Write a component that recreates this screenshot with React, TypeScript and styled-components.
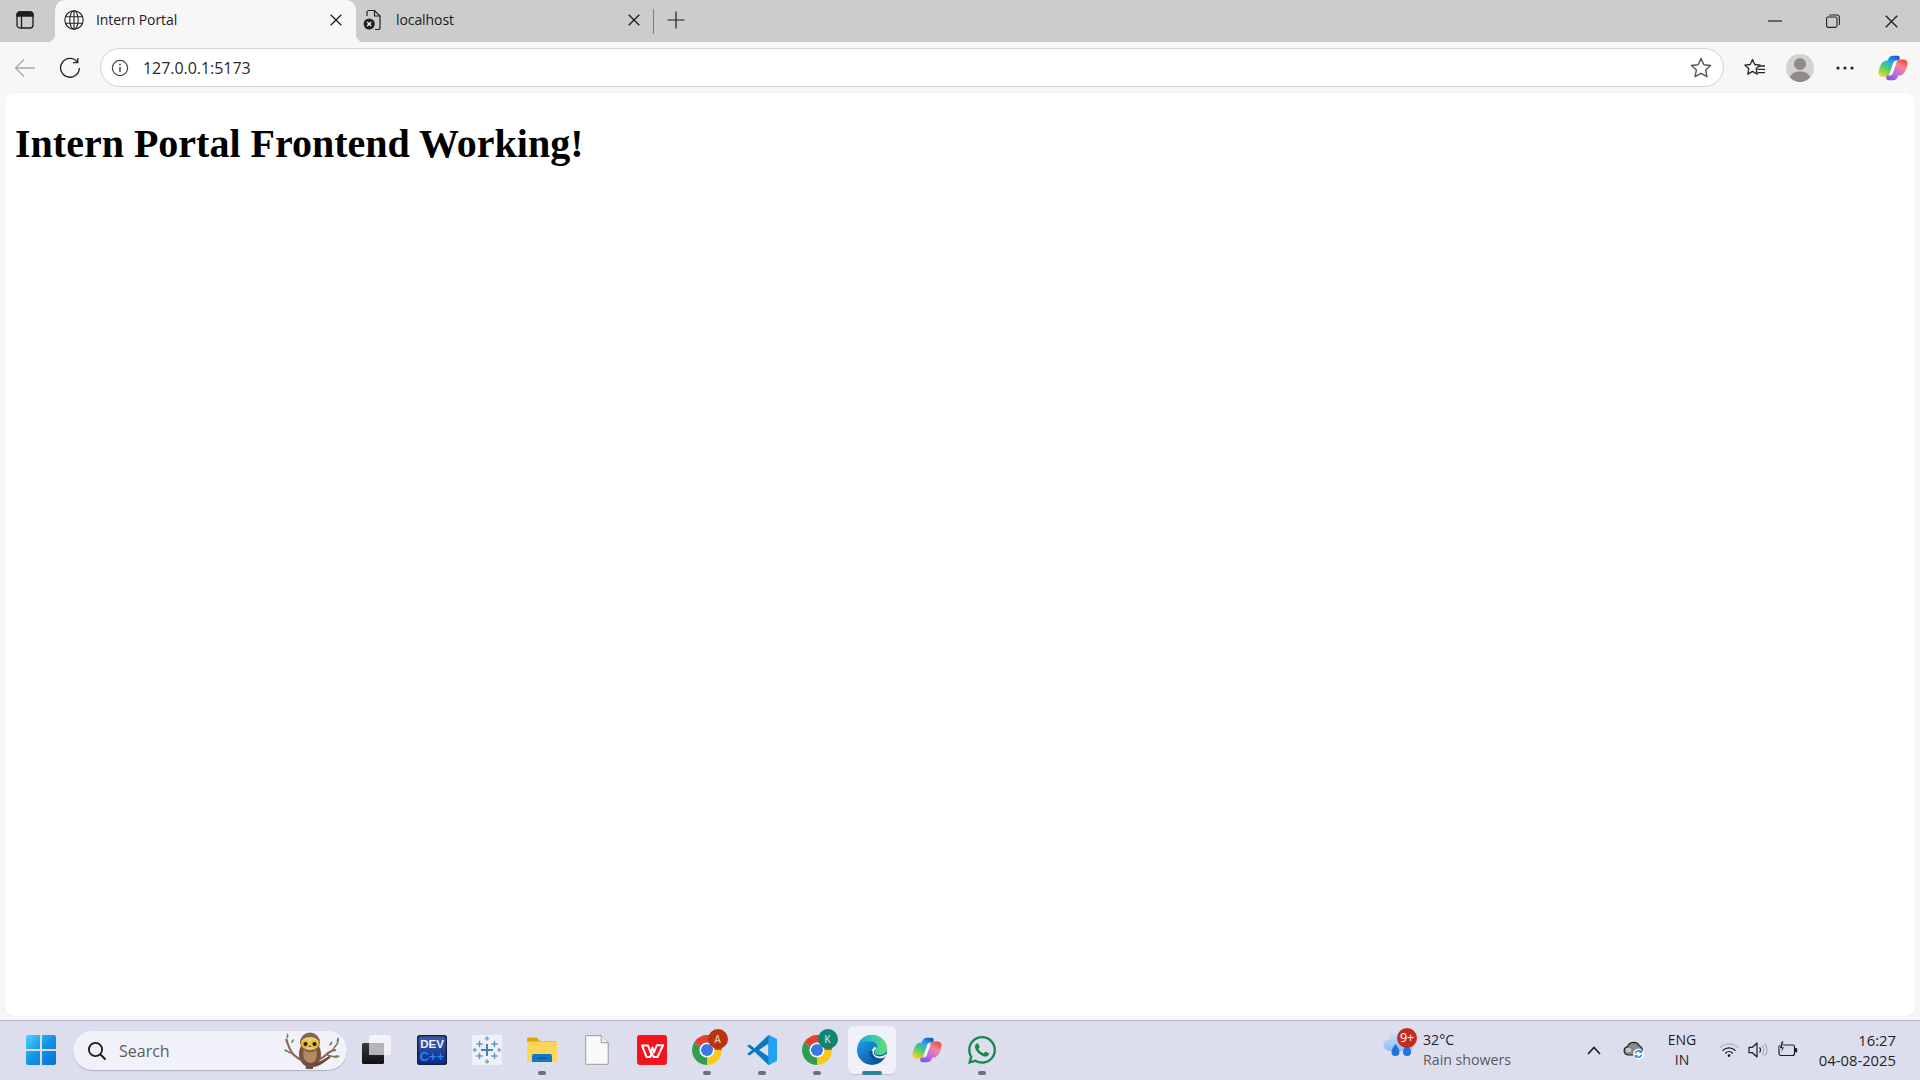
import React from "react";
import styled, { createGlobalStyle } from "styled-components";
import { FaWhatsapp } from "react-icons/fa";

const Global = createGlobalStyle`
  html, body { margin: 0; padding: 0; background: #ccc; }
  #root { width: 1920px; height: 1080px; overflow: hidden; }
  * { box-sizing: border-box; }
`;

const UI = `"Open Sans", "Noto Sans", Arial, sans-serif`;

const Screen = styled.div`
  width: 1920px;
  height: 1080px;
  display: flex;
  flex-direction: column;
  font-family: ${UI};
  color: #1f1f1f;
`;

const TabStrip = styled.header`
  height: 42px;
  flex: none;
  background: #cccccc;
  display: flex;
  align-items: stretch;
`;

const StripButton = styled.div<{ $w: number }>`
  width: ${(p) => p.$w}px;
  flex: none;
  display: flex;
  align-items: center;
  justify-content: center;
  padding-bottom: 2px;
`;

const Tab = styled.div<{ $active?: boolean; $w: number; $pl: number; $pr: number; $gap: number }>`
  position: relative;
  width: ${(p) => p.$w}px;
  flex: none;
  display: flex;
  align-items: center;
  gap: ${(p) => p.$gap}px;
  padding: 0 ${(p) => p.$pr}px 2px ${(p) => p.$pl}px;
  background: ${(p) => (p.$active ? "#f7f7f7" : "transparent")};
  border-radius: ${(p) => (p.$active ? "10px 10px 0 0" : "0")};
  ${(p) =>
    p.$active &&
    `
    &::before, &::after {
      content: "";
      position: absolute;
      bottom: 0;
      width: 8px;
      height: 8px;
    }
    &::before { left: -8px; background: radial-gradient(circle at 0 0, transparent 8px, #f7f7f7 8.5px); }
    &::after { right: -8px; background: radial-gradient(circle at 100% 0, transparent 8px, #f7f7f7 8.5px); }
  `}
`;

const TabTitle = styled.span`
  font-size: 14px;
  letter-spacing: -0.08px;
  line-height: 18px;
  flex: 1;
  white-space: nowrap;
  color: #202020;
`;

const TabDivider = styled.div`
  width: 1px;
  height: 25px;
  margin: 9px 0 0;
  background: #7c7c7c;
  flex: none;
`;

const WindowControls = styled.div`
  margin-left: auto;
  display: flex;
`;

const WindowButton = styled.div`
  width: 58px;
  height: 42px;
  display: flex;
  align-items: center;
  justify-content: center;
`;

const Toolbar = styled.div`
  height: 51px;
  flex: none;
  background: #f7f7f7;
  display: flex;
  align-items: center;
  padding: 0 0 0 2px;
`;

const ToolButton = styled.div<{ $w?: number }>`
  width: ${(p) => p.$w ?? 45}px;
  height: 40px;
  flex: none;
  display: flex;
  align-items: center;
  justify-content: center;
`;

const AddressBar = styled.div`
  flex: 1;
  height: 39px;
  margin-left: 8px;
  background: #ffffff;
  border: 1px solid #d2d2d2;
  border-radius: 20px;
  display: flex;
  align-items: center;
  padding: 0 11px 0 10px;
`;

const UrlText = styled.span`
  font-size: 16px;
  letter-spacing: -0.05px;
  color: #2a2a2a;
  margin-left: 14px;
  flex: 1;
`;

const ToolbarEnd = styled.div`
  display: flex;
  align-items: center;
  width: 196px;
  flex: none;
  padding-left: 8px;
`;

const Viewport = styled.main`
  flex: 1;
  min-height: 0;
  background: #f7f7f7;
  padding: 0 5px 4px;
  display: flex;
`;

const Page = styled.div`
  flex: 1;
  background: #ffffff;
  border-radius: 8px;
  box-shadow: 0 0 1px rgba(0, 0, 0, 0.16);
  padding: 28px 10px 0;
  font-family: "Liberation Serif", "Times New Roman", serif;
`;

const Heading = styled.h1`
  margin: 0;
  font-size: 40px;
  line-height: 46px;
  font-weight: 700;
  color: #000;
`;

const Taskbar = styled.footer`
  height: 60px;
  flex: none;
  background: #dcdeee;
  border-top: 1px solid #b5b5c4;
  display: flex;
  align-items: center;
  padding-left: 26px;
`;

const StartButton = styled.div`
  width: 30px;
  height: 30px;
  flex: none;
  margin-right: 17px;
  margin-top: -1px;
`;

const SearchPill = styled.div`
  width: 274px;
  height: 39px;
  flex: none;
  position: relative;
  background: #f1f2f9;
  border-radius: 20px;
  box-shadow: 0 1px 1px rgba(90, 90, 120, 0.35);
  display: flex;
  align-items: center;
  padding-left: 14px;
  gap: 12px;
`;

const SearchText = styled.span`
  font-size: 16px;
  color: #5c5c5c;
`;

const OwlSlot = styled.div`
  position: absolute;
  right: 6px;
  top: 0;
  width: 58px;
  height: 38px;
`;

const AppRow = styled.div`
  display: flex;
  margin-left: 2px;
  height: 59px;
`;

const AppSlot = styled.div<{ $active?: boolean }>`
  position: relative;
  width: 55px;
  height: 59px;
  flex: none;
  display: flex;
  align-items: center;
  justify-content: center;
  padding-bottom: 1px;
  &::before {
    content: "";
    display: ${(p) => (p.$active ? "block" : "none")};
    position: absolute;
    left: 4px;
    right: 3px;
    top: 5px;
    height: 48px;
    background: #eff0f8;
    border-radius: 5px;
    box-shadow: 0 1px 1px rgba(90, 90, 120, 0.2);
  }
`;

const RunDot = styled.span<{ $active?: boolean }>`
  position: absolute;
  left: 50%;
  bottom: 5px;
  transform: translateX(-50%);
  width: ${(p) => (p.$active ? 20 : 8)}px;
  height: 4px;
  border-radius: 2px;
  background: ${(p) => (p.$active ? "#2a8597" : "#6e6e76")};
`;

const AppIcon = styled.div`
  position: relative;
  width: 30px;
  height: 30px;
`;

const AccountBadge = styled.span<{ $bg: string; $fg: string }>`
  position: absolute;
  top: -6px;
  right: -6px;
  width: 20px;
  height: 20px;
  border-radius: 50%;
  background: ${(p) => p.$bg};
  color: ${(p) => p.$fg};
  font-size: 10px;
  font-weight: 600;
  display: flex;
  align-items: center;
  justify-content: center;
`;

const Tray = styled.div`
  margin-left: auto;
  display: flex;
  align-items: center;
  height: 59px;
  padding-bottom: 1px;
`;

const Weather = styled.div`
  display: flex;
  align-items: center;
  width: 196px;
  flex: none;
  padding-left: 7.5px;
`;

const WeatherIcon = styled.div`
  position: relative;
  width: 36px;
  height: 40px;
  flex: none;
  margin-right: 4px;
`;

const WeatherBadge = styled.span`
  position: absolute;
  left: 14px;
  top: -2px;
  width: 20px;
  height: 20px;
  border-radius: 50%;
  background: #c42b1c;
  color: #fff;
  font-size: 12.5px;
  line-height: 20px;
  text-align: center;
  letter-spacing: -0.2px;
`;

const WeatherText = styled.div`
  display: flex;
  flex-direction: column;
  font-size: 14.2px;
  line-height: 20px;
  white-space: nowrap;
`;

const WeatherCond = styled.span`
  color: #5a5a5a;
`;

const TrayIcon = styled.div<{ $w: number }>`
  width: ${(p) => p.$w}px;
  flex: none;
  display: flex;
  align-items: center;
  justify-content: center;
`;

const Lang = styled.div`
  width: 56px;
  flex: none;
  font-size: 14px;
  line-height: 20px;
  text-align: center;
  margin: 0 3.5px 0 2.5px;
`;

const Clock = styled.div`
  width: 116.5px;
  flex: none;
  font-size: 14.8px;
  line-height: 20px;
  text-align: right;
  padding-right: 24px;
  white-space: nowrap;
`;

const X = ({ s = 12, w = 1.3, c = "#1c1c1c" }: { s?: number; w?: number; c?: string }) => (
  <svg width={s} height={s} viewBox="0 0 12 12" fill="none" stroke={c} strokeWidth={w}>
    <path d="M.7.7l10.6 10.6M11.3.7L.7 11.3" />
  </svg>
);

const SidebarIcon = () => (
  <svg width="18" height="18" viewBox="0 0 18 18" fill="none" stroke="#1c1c1c" strokeWidth="1.3">
    <rect x="1" y="1" width="16" height="16" rx="3" />
    <path d="M1 4a3 3 0 0 1 3-3h10a3 3 0 0 1 3 3v1H1z" fill="#1c1c1c" />
    <path d="M5.5 5v12" />
  </svg>
);

const Globe = () => (
  <svg width="20" height="20" viewBox="0 0 20 20" fill="none" stroke="#222" strokeWidth="1.1">
    <circle cx="10" cy="10" r="9.2" />
    <ellipse cx="10" cy="10" rx="4.2" ry="9.2" />
    <path d="M10 .8v18.4M1.6 6.7h16.8M1.6 13.3h16.8" />
  </svg>
);

const BrokenDoc = () => (
  <svg width="19" height="22" viewBox="0 0 19 22" fill="none">
    <path d="M4 7V3.5A2 2 0 0 1 6 1.5h5.5L17 7v11.5a2 2 0 0 1-2 2h-3M11.5 1.5V7H17" stroke="#222" strokeWidth="1.2" />
    <circle cx="6.2" cy="15" r="5.6" fill="#222" />
    <path d="M4.2 13l4 4M8.2 13l-4 4" stroke="#fff" strokeWidth="1.2" />
  </svg>
);

const Plus = () => (
  <svg width="18" height="18" viewBox="0 0 18 18" stroke="#1c1c1c" strokeWidth="1.2">
    <path d="M9 .5v17M.5 9h17" />
  </svg>
);

const Back = () => (
  <svg width="22" height="20" viewBox="0 0 22 20" fill="none" stroke="#a9a9a9" strokeWidth="1.3">
    <path d="M21 10H1.5M10 1.5L1.5 10l8.5 8.5" />
  </svg>
);

const Reload = () => (
  <svg width="22" height="22" viewBox="0 0 22 22" fill="none" stroke="#262626" strokeWidth="1.35">
    <path d="M18.4 5A9.4 9.4 0 1 0 20.4 11" />
    <path d="M18.8 1v4.6h-4.8" />
  </svg>
);

const Info = () => (
  <svg width="18" height="18" viewBox="0 0 18 18" fill="none" stroke="#444" strokeWidth="1.2">
    <circle cx="9" cy="9" r="7.6" />
    <path d="M9 8v5" strokeWidth="1.5" />
    <circle cx="9" cy="5.4" r=".9" fill="#444" stroke="none" />
  </svg>
);

const Star = () => (
  <svg width="22" height="21" viewBox="0 0 22 21" fill="none" stroke="#555" strokeWidth="1.4" strokeLinejoin="round">
    <path d="M11 1.5l2.9 6.2 6.7.8-5 4.6 1.4 6.6-6-3.4-6 3.4 1.4-6.6-5-4.6 6.7-.8z" />
  </svg>
);

const Favorites = () => (
  <svg width="22" height="20" viewBox="0 0 22 20" fill="none" stroke="#262626" strokeWidth="1.3" strokeLinejoin="round">
    <path d="M8.5 1.5l2.3 5 5.4.6-4 3.7 1.1 5.3-4.8-2.7-4.8 2.7 1.1-5.3-4-3.7 5.4-.6z" />
    <path d="M14.5 8H21M13.5 11.3H21M14 14.6h7" />
  </svg>
);

const Profile = () => (
  <svg width="28" height="28" viewBox="0 0 28 28">
    <circle cx="14" cy="14" r="14" fill="#d4d2ce" />
    <circle cx="14" cy="10" r="6" fill="#8f8b87" />
    <path d="M4 23.5C5.5 19 9 17.5 14 17.5S22.5 19 24 23.5A14 14 0 0 1 14 28 14 14 0 0 1 4 23.5z" fill="#8f8b87" />
  </svg>
);

const Dots = () => (
  <svg width="18" height="4" viewBox="0 0 18 4" fill="#262626">
    <circle cx="2" cy="2" r="1.6" />
    <circle cx="9" cy="2" r="1.6" />
    <circle cx="16" cy="2" r="1.6" />
  </svg>
);

const RIBBON =
  "M11 6.5C12 4.2 14 3 16.2 3h4.6c2 0 3 1.7 2.2 3.6l-.5 1.4h-3.2c-1.6 0-2.6.9-3.1 2.4L12.3 22c-.6 2-2 3.2-4.1 3.2H5C1.5 25.2 0 22.5.7 19.5 1.5 15.5 2.5 13 4 11 5.5 8.8 7.5 8 10.2 8z";

const Copilot = ({ id }: { id: string }) => (
  <svg width="30" height="30" viewBox="0 0 32 32">
    <defs>
      <linearGradient id={`${id}l`} x1="0.75" y1="0" x2="0.2" y2="1">
        <stop offset="0" stopColor="#1a5fd0" />
        <stop offset="0.3" stopColor="#27a7e8" />
        <stop offset="0.62" stopColor="#4fd06a" />
        <stop offset="1" stopColor="#f7d32a" />
      </linearGradient>
      <linearGradient id={`${id}r`} x1="0.25" y1="1" x2="0.8" y2="0">
        <stop offset="0" stopColor="#f0503a" />
        <stop offset="0.3" stopColor="#f582a0" />
        <stop offset="0.68" stopColor="#c26be0" />
        <stop offset="1" stopColor="#7c56e0" />
      </linearGradient>
    </defs>
    <path d="M16.5 10h3.2l-3.9 11.6h-3.4z" fill="#fff" />
    <path d={RIBBON} fill={`url(#${id}l)`} />
    <path d={RIBBON} fill={`url(#${id}r)`} transform="rotate(180 16 16)" />
  </svg>
);

const MinIcon = () => (
  <svg width="14" height="2" viewBox="0 0 14 2" stroke="#222" strokeWidth="1.2">
    <path d="M0 1h14" />
  </svg>
);

const RestoreIcon = () => (
  <svg width="14" height="14" viewBox="0 0 14 14" fill="none" stroke="#222" strokeWidth="1.1">
    <rect x=".6" y="3" width="10.4" height="10.4" rx="1.6" />
    <path d="M3.2 1H11a2.4 2.4 0 0 1 2.4 2.4V11" />
  </svg>
);

const WinLogo = () => (
  <svg width="30" height="30" viewBox="0 0 30 30">
    <defs>
      <linearGradient id="win" x1="0" y1="0" x2="1" y2="1">
        <stop offset="0" stopColor="#4fd0fb" />
        <stop offset="0.5" stopColor="#1193e8" />
        <stop offset="1" stopColor="#0a6fd0" />
      </linearGradient>
    </defs>
    <path d="M2 0h12v14H0V2a2 2 0 0 1 2-2zM16 0h12a2 2 0 0 1 2 2v12H16zM0 16h14v14H2a2 2 0 0 1-2-2zM16 16h14v12a2 2 0 0 1-2 2H16z" fill="url(#win)" />
  </svg>
);

const Magnifier = () => (
  <svg width="20" height="20" viewBox="0 0 20 20" fill="none" stroke="#1f1f1f" strokeWidth="1.9" strokeLinecap="round">
    <circle cx="8.5" cy="8.5" r="6.6" />
    <path d="M13.5 13.5L18 18" />
  </svg>
);

const Owl = () => (
  <svg width="58" height="38" viewBox="0 0 58 38">
    <path d="M3 8c2 5 3 9 6 14 4 5 9 7 14 9 8 1 16-3 22-9 3-2 5-3 8-3" fill="none" stroke="#8b6a55" strokeWidth="2.2" />
    <path d="M9 22l-4-1M49 20c2-3 4-6 6-8M44 24c3 1 7 2 11 2" fill="none" stroke="#8b6a55" strokeWidth="1.5" />
    <path d="M4 8c-1-2 0-4 0-6 2 2 2 4 0 6zM8 12c0-2 2-4 3-4 0 2-1 4-3 4zM1 19c2-1 4 0 5 2-2 0-4 0-5-2zM46 15c0-2 2-4 3-5 1 2 0 4-3 5zM54 13c-1-3 0-5 1-7 2 3 1 5-1 7zM50 26c2-2 5-2 7-1-2 2-5 2-7 1z" fill="#4f9a4a" />
    <ellipse cx="27" cy="23" rx="11" ry="13" fill="#7b5338" />
    <path d="M21 18c4-2 8-2 12 0 2 6 1 12-6 16-6-3-8-10-6-16z" fill="#b48a63" />
    <circle cx="27" cy="11.5" r="10" fill="#8a6246" />
    <path d="M18 12a9 6 0 0 1 18 0 9 7 0 0 1-18 0z" fill="#e2c98f" />
    <circle cx="22.5" cy="13" r="4" fill="#e8c423" />
    <circle cx="31.5" cy="13" r="4" fill="#e8c423" />
    <circle cx="22.5" cy="13" r="2.1" fill="#222" />
    <circle cx="31.5" cy="13" r="2.1" fill="#222" />
    <path d="M27 14l-1.3 2h2.6z" fill="#4b3628" />
    <path d="M21 31l3 3M28 33l4-1" stroke="#5a4aa0" strokeWidth="2" />
    <path d="M22 29c5 6 14 3 24-4l2 1c-8 7-14 10-18 10v2h-7z" fill="#6e4c38" />
  </svg>
);

const TaskView = () => (
  <svg width="30" height="30" viewBox="0 0 30 30">
    <defs>
      <linearGradient id="tvd" x1="0" y1="0" x2="0" y2="1">
        <stop offset="0" stopColor="#3a3a3a" />
        <stop offset="1" stopColor="#111" />
      </linearGradient>
    </defs>
    <rect x="0" y="8" width="22" height="21" rx="1.5" fill="url(#tvd)" />
    <rect x="7" y="0" width="22" height="20" rx="1.5" fill="#f4f4f8" opacity="0.9" />
    <rect x="7" y="8" width="15" height="12" fill="#b5b5b8" />
  </svg>
);

const DevCpp = () => (
  <svg width="30" height="30" viewBox="0 0 30 30">
    <defs>
      <linearGradient id="dev" x1="0" y1="0" x2="0" y2="1">
        <stop offset="0" stopColor="#3d5ba8" />
        <stop offset="1" stopColor="#0f2a8f" />
      </linearGradient>
    </defs>
    <rect width="30" height="30" rx="2.5" fill="#14223f" />
    <rect x="1.5" y="1.5" width="27" height="27" rx="1.5" fill="url(#dev)" />
    <text x="15" y="13" textAnchor="middle" fontSize="11.5" fontWeight="700" fontFamily="Liberation Sans, sans-serif" fill="#eef">DEV</text>
    <text x="15" y="26" textAnchor="middle" fontSize="13" fontWeight="700" fontFamily="Liberation Sans, sans-serif" fill="#1c8ae6">C++</text>
  </svg>
);

const Cross = ({ x, y, r, c, w = 1.4 }: { x: number; y: number; r: number; c: string; w?: number }) => (
  <path d={`M${x - r} ${y}h${2 * r}M${x} ${y - r}v${2 * r}`} stroke={c} strokeWidth={w} />
);

const Tableau = () => (
  <svg width="30" height="30" viewBox="0 0 30 30">
    <rect width="30" height="30" rx="1" fill="#f0f1f6" />
    <Cross x={15} y={15} r={6} c="#4a82b8" w={2} />
    <Cross x={7.5} y={9} r={3.2} c="#5d9ac7" />
    <Cross x={22.5} y={9} r={3.2} c="#5d9ac7" />
    <Cross x={7.5} y={21} r={3.2} c="#5d9ac7" />
    <Cross x={22.5} y={21} r={3.2} c="#5d9ac7" />
    <Cross x={15} y={3.5} r={2.2} c="#6ea8d0" />
    <Cross x={15} y={26.5} r={2.2} c="#6ea8d0" />
    <Cross x={2.8} y={15} r={2} c="#6ea8d0" />
    <Cross x={27.2} y={15} r={2} c="#6ea8d0" />
  </svg>
);

const Folder = () => (
  <svg width="30" height="30" viewBox="0 0 30 30">
    <path d="M0 4a1.5 1.5 0 0 1 1.5-1.5h8L13 6h16v6H0z" fill="#dfa30b" />
    <path d="M0 6.5h30V27H0z" fill="#fcd55a" />
    <path d="M5 21a2 2 0 0 1 2-2h16a2 2 0 0 1 2 2v6H5z" fill="#0f79c4" />
    <path d="M10 23h10" stroke="#074d8c" strokeWidth="1.2" />
  </svg>
);

const DocFile = () => (
  <svg width="24" height="30" viewBox="0 0 24 30">
    <path d="M.7.7h15.5l7 7v21.6H.7z" fill="#fafafa" stroke="#9a9a9a" strokeWidth="1" />
    <path d="M16.2.7v7h7" fill="#eee" stroke="#9a9a9a" strokeWidth="1" />
  </svg>
);

const Wps = () => (
  <svg width="30" height="30" viewBox="0 0 30 30">
    <rect width="30" height="30" rx="3" fill="#f4141f" />
    <path d="M5 10.5h6l2.6 7 1.8-5 1.5 5 2.9-7.2H26L20.5 22h-4l-1.6-4-1.7 4h-3.6z" fill="none" stroke="#fff" strokeWidth="2" strokeLinejoin="round" />
  </svg>
);

const sector = (a0: number, a1: number, r = 15) => {
  const p = (a: number) => [15 + r * Math.cos((a * Math.PI) / 180), 15 + r * Math.sin((a * Math.PI) / 180)];
  const [x0, y0] = p(a0);
  const [x1, y1] = p(a1);
  return `M15 15L${x0} ${y0}A${r} ${r} 0 ${a1 - a0 > 180 ? 1 : 0} 1 ${x1} ${y1}z`;
};

const Chrome = () => (
  <svg width="30" height="30" viewBox="0 0 30 30">
    <path d={sector(-150, 0)} fill="#e5402f" />
    <path d={sector(0, 100)} fill="#f9c81e" />
    <path d={sector(90, 210)} fill="#2f9e4f" />
    <circle cx="15" cy="15" r="7.6" fill="#fff" />
    <circle cx="15" cy="15" r="6" fill="#3a78ea" />
  </svg>
);

const VSCode = () => (
  <svg width="30" height="30" viewBox="0 0 30 30">
    <path d="M21.5 0L7.5 13.2 2.6 9.5 0 11l5 4-5 4 2.6 1.5 4.9-3.7L21.5 30l3-1.5v-27z" fill="#0a78c8" />
    <path d="M21.5 8.5L12 15l9.5 6.5z" fill="#dcdeee" />
    <path d="M21.5 0L30 4v22l-8.5 4z" fill="#22a3f0" />
  </svg>
);

const Edge = () => (
  <svg width="30" height="30" viewBox="0 0 30 30">
    <defs>
      <linearGradient id="eg" x1="0.95" y1="0.3" x2="0" y2="0.3">
        <stop offset="0" stopColor="#5fdd6c" />
        <stop offset="0.5" stopColor="#35c8b4" />
        <stop offset="1" stopColor="#1aa3e0" />
      </linearGradient>
      <linearGradient id="eb" x1="0.1" y1="0.2" x2="0.7" y2="1">
        <stop offset="0" stopColor="#1b9ae0" />
        <stop offset="0.6" stopColor="#1370c0" />
        <stop offset="1" stopColor="#0c4d96" />
      </linearGradient>
    </defs>
    <circle cx="15" cy="15" r="15" fill="url(#eb)" />
    <path d="M2 7.5C4.8 2.8 9.6 0 15 0c8.5 0 15 6 15 13.5 0 3.8-3 6.5-7.5 6.5-3 0-5-1-5-2.6 0-3.4 2.5-3 2.5-6C20 8.4 17.5 6.2 13.5 6.2 9 6.2 5 6.8 2 7.5z" fill="url(#eg)" />
    <path d="M29.3 20c-2 1.8-4.3 2.6-7.3 2.6-3.8 0-6.3-2-6.3-5 0-2.4 1.3-4 3-5.1" fill="none" stroke="#eef2f8" strokeWidth="2.2" />
    <path d="M13.8 16c0 5 3.6 8.8 9.6 9" fill="none" stroke="#0c4d96" strokeWidth="3" />
  </svg>
);

const WeatherCloud = () => (
  <svg width="32" height="30" viewBox="0 0 32 30">
    <defs>
      <linearGradient id="cl" x1="0" y1="0" x2="0" y2="1">
        <stop offset="0" stopColor="#cfe4fb" />
        <stop offset="1" stopColor="#8fbdf0" />
      </linearGradient>
    </defs>
    <path d="M7 21a6 6 0 0 1-1-12 9.5 9.5 0 0 1 18-1 6.5 6.5 0 0 1 1 13z" fill="url(#cl)" />
    <path d="M12.5 14c2 3 4 5 4 8a4 4 0 0 1-8 0c0-3 2-5 4-8zM24 14c2 3 4 5 4 8a4 4 0 0 1-8 0c0-3 2-5 4-8z" fill="#1f74e0" />
  </svg>
);

const Chevron = () => (
  <svg width="14" height="9" viewBox="0 0 14 9" fill="none" stroke="#1c1c1c" strokeWidth="1.6">
    <path d="M1 8l6-6.5L13 8" />
  </svg>
);

const CloudSync = () => (
  <svg width="22" height="20" viewBox="0 0 22 20">
    <path d="M5 15a4.2 4.2 0 0 1-.5-8.3A6.5 6.5 0 0 1 16.5 6 4.5 4.5 0 0 1 19 12l-3 3z" fill="#8a8a8a" stroke="#1f1f1f" strokeWidth="1.2" />
    <path d="M3 10h5" stroke="#f0f0f0" strokeWidth="4" opacity="0.6" />
    <circle cx="15.5" cy="14" r="5.4" fill="#fff" />
    <path d="M12.5 13.5a3.2 3.2 0 0 1 5.6-1.6M18.5 14.5a3.2 3.2 0 0 1-5.6 1.6" fill="none" stroke="#1a74d8" strokeWidth="1.3" />
    <path d="M18.8 10v2.4h-2.4M12.2 18v-2.4h2.4" fill="none" stroke="#1a74d8" strokeWidth="1" />
  </svg>
);

const Wifi = () => (
  <svg width="20" height="16" viewBox="0 0 20 16" fill="none" strokeLinecap="round">
    <path d="M1 5.5a13 13 0 0 1 18 0" stroke="#b0b0b8" strokeWidth="1.2" />
    <path d="M3.8 8.4a9 9 0 0 1 12.4 0M6.6 11a5 5 0 0 1 6.8 0" stroke="#1c1c1c" strokeWidth="1.3" />
    <circle cx="10" cy="13.6" r="1.3" fill="#1c1c1c" />
  </svg>
);

const Volume = () => (
  <svg width="20" height="18" viewBox="0 0 20 18" fill="none" strokeLinejoin="round">
    <path d="M1 6.3h3.4L9 2v14l-4.6-4.3H1z" stroke="#1c1c1c" strokeWidth="1.2" />
    <path d="M11.5 6.5a3.5 3.5 0 0 1 0 5" stroke="#1c1c1c" strokeWidth="1.2" />
    <path d="M14 4.5a6.5 6.5 0 0 1 0 9M16.5 2.5a9.5 9.5 0 0 1 0 13" stroke="#a8a8b0" strokeWidth="1.1" />
  </svg>
);

const Battery = () => (
  <svg width="20" height="18" viewBox="0 0 20 18" fill="none">
    <rect x="1" y="4" width="15.5" height="10.5" rx="2" stroke="#1c1c1c" strokeWidth="1.2" />
    <path d="M17.5 7.5h1.2v3.5h-1.2z" fill="#1c1c1c" stroke="#1c1c1c" />
    <path d="M3.5 0L1.5 7.5h2.2L2.5 13l4-7H4.3L5.8 0z" fill="#1c1c1c" stroke="#dcdeee" strokeWidth="0.8" />
  </svg>
);

export default function App() {
  return (
    <Screen>
      <Global />
      <TabStrip>
        <StripButton $w={49}>
          <SidebarIcon />
        </StripButton>
        <StripButton $w={6} />
        <Tab $active $w={301} $pl={9} $pr={14} $gap={12}>
          <Globe />
          <TabTitle>Intern Portal</TabTitle>
          <X />
        </Tab>
        <Tab $w={297} $pl={7} $pr={13} $gap={14}>
          <BrokenDoc />
          <TabTitle>localhost</TabTitle>
          <X />
        </Tab>
        <TabDivider />
        <StripButton $w={43}>
          <Plus />
        </StripButton>
        <WindowControls>
          <WindowButton>
            <MinIcon />
          </WindowButton>
          <WindowButton>
            <RestoreIcon />
          </WindowButton>
          <WindowButton>
            <X s={13} w={1.2} />
          </WindowButton>
        </WindowControls>
      </TabStrip>
      <Toolbar>
        <ToolButton>
          <Back />
        </ToolButton>
        <ToolButton>
          <Reload />
        </ToolButton>
        <AddressBar>
          <Info />
          <UrlText>127.0.0.1:5173</UrlText>
          <Star />
        </AddressBar>
        <ToolbarEnd>
          <ToolButton>
            <Favorites />
          </ToolButton>
          <ToolButton>
            <Profile />
          </ToolButton>
          <ToolButton>
            <Dots />
          </ToolButton>
          <ToolButton $w={51}>
            <Copilot id="cpt" />
          </ToolButton>
        </ToolbarEnd>
      </Toolbar>
      <Viewport>
        <Page>
          <Heading>Intern Portal Frontend Working!</Heading>
        </Page>
      </Viewport>
      <Taskbar>
        <StartButton>
          <WinLogo />
        </StartButton>
        <SearchPill>
          <Magnifier />
          <SearchText>Search</SearchText>
          <OwlSlot>
            <Owl />
          </OwlSlot>
        </SearchPill>
        <AppRow>
          <AppSlot>
            <TaskView />
          </AppSlot>
          <AppSlot>
            <DevCpp />
          </AppSlot>
          <AppSlot>
            <Tableau />
          </AppSlot>
          <AppSlot>
            <Folder />
            <RunDot />
          </AppSlot>
          <AppSlot>
            <DocFile />
          </AppSlot>
          <AppSlot>
            <Wps />
          </AppSlot>
          <AppSlot>
            <AppIcon>
              <Chrome />
              <AccountBadge $bg="#b8340f" $fg="#f0b9a8">A</AccountBadge>
            </AppIcon>
            <RunDot />
          </AppSlot>
          <AppSlot>
            <VSCode />
            <RunDot />
          </AppSlot>
          <AppSlot>
            <AppIcon>
              <Chrome />
              <AccountBadge $bg="#0e8571" $fg="#b5e0d8">K</AccountBadge>
            </AppIcon>
            <RunDot />
          </AppSlot>
          <AppSlot $active>
            <AppIcon>
              <Edge />
            </AppIcon>
            <RunDot $active />
          </AppSlot>
          <AppSlot>
            <Copilot id="cpb" />
          </AppSlot>
          <AppSlot>
            <FaWhatsapp size={32} color="#17874f" />
            <RunDot />
          </AppSlot>
        </AppRow>
        <Tray>
          <Weather>
            <WeatherIcon>
              <WeatherCloud />
              <WeatherBadge>9+</WeatherBadge>
            </WeatherIcon>
            <WeatherText>
              <span>32°C</span>
              <WeatherCond>Rain showers</WeatherCond>
            </WeatherText>
          </Weather>
          <TrayIcon $w={44}>
            <Chevron />
          </TrayIcon>
          <TrayIcon $w={36}>
            <CloudSync />
          </TrayIcon>
          <Lang>
            ENG
            <br />
            IN
          </Lang>
          <TrayIcon $w={30}>
            <Wifi />
          </TrayIcon>
          <TrayIcon $w={28}>
            <Volume />
          </TrayIcon>
          <TrayIcon $w={32}>
            <Battery />
          </TrayIcon>
          <Clock>
            16:27
            <br />
            04-08-2025
          </Clock>
        </Tray>
      </Taskbar>
    </Screen>
  );
}
